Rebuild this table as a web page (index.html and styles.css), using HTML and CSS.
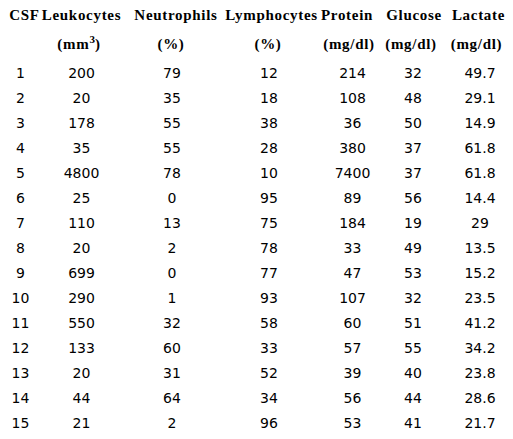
FILE: index.html
```html
<!DOCTYPE html>
<html>
<head>
<meta charset="utf-8">
<link rel="stylesheet" href="styles.css">
</head>
<body>
<div class="csf-table">
  <div class="head">
    <div class="row head-row">
      <div class="cell pl8"><span>CSF</span></div>
      <div class="cell"><span>Leukocytes</span></div>
      <div class="cell pl8"><span>Neutrophils</span></div>
      <div class="cell pl5"><span>Lymphocytes</span></div>
      <div class="cell pr11"><span>Protein</span></div>
      <div class="cell pl2"><span>Glucose</span></div>
      <div class="cell pl7"><span>Lactate</span></div>
    </div>
    <div class="row head-row">
      <div class="cell"></div>
      <div class="cell pr5"><span>(mm<sup>3</sup>)</span></div>
      <div class="cell pr2"><span>(%)</span></div>
      <div class="cell pr2"><span>(%)</span></div>
      <div class="cell pr7"><span>(mg/dl)</span></div>
      <div class="cell pr4"><span>(mg/dl)</span></div>
      <div class="cell pl3"><span>(mg/dl)</span></div>
    </div>
  </div>
  <div class="body">
    <div class="row data-row"><div class="cell">1</div><div class="cell">200</div><div class="cell">79</div><div class="cell">12</div><div class="cell">214</div><div class="cell">32</div><div class="cell pl10">49.7</div></div>
    <div class="row data-row"><div class="cell">2</div><div class="cell">20</div><div class="cell">35</div><div class="cell">18</div><div class="cell">108</div><div class="cell">48</div><div class="cell pl10">29.1</div></div>
    <div class="row data-row"><div class="cell">3</div><div class="cell">178</div><div class="cell">55</div><div class="cell">38</div><div class="cell">36</div><div class="cell">50</div><div class="cell pl10">14.9</div></div>
    <div class="row data-row"><div class="cell">4</div><div class="cell">35</div><div class="cell">55</div><div class="cell">28</div><div class="cell">380</div><div class="cell">37</div><div class="cell pl10">61.8</div></div>
    <div class="row data-row"><div class="cell">5</div><div class="cell">4800</div><div class="cell">78</div><div class="cell">10</div><div class="cell">7400</div><div class="cell">37</div><div class="cell pl10">61.8</div></div>
    <div class="row data-row"><div class="cell">6</div><div class="cell">25</div><div class="cell">0</div><div class="cell">95</div><div class="cell">89</div><div class="cell">56</div><div class="cell pl10">14.4</div></div>
    <div class="row data-row"><div class="cell">7</div><div class="cell">110</div><div class="cell">13</div><div class="cell">75</div><div class="cell">184</div><div class="cell">19</div><div class="cell pl10">29</div></div>
    <div class="row data-row"><div class="cell">8</div><div class="cell">20</div><div class="cell">2</div><div class="cell">78</div><div class="cell">33</div><div class="cell">49</div><div class="cell pl10">13.5</div></div>
    <div class="row data-row"><div class="cell">9</div><div class="cell">699</div><div class="cell">0</div><div class="cell">77</div><div class="cell">47</div><div class="cell">53</div><div class="cell pl10">15.2</div></div>
    <div class="row data-row"><div class="cell">10</div><div class="cell">290</div><div class="cell">1</div><div class="cell">93</div><div class="cell">107</div><div class="cell">32</div><div class="cell pl10">23.5</div></div>
    <div class="row data-row"><div class="cell">11</div><div class="cell">550</div><div class="cell">32</div><div class="cell">58</div><div class="cell">60</div><div class="cell">51</div><div class="cell pl10">41.2</div></div>
    <div class="row data-row"><div class="cell">12</div><div class="cell">133</div><div class="cell">60</div><div class="cell">33</div><div class="cell">57</div><div class="cell">55</div><div class="cell pl10">34.2</div></div>
    <div class="row data-row"><div class="cell">13</div><div class="cell">20</div><div class="cell">31</div><div class="cell">52</div><div class="cell">39</div><div class="cell">40</div><div class="cell pl10">23.8</div></div>
    <div class="row data-row"><div class="cell">14</div><div class="cell">44</div><div class="cell">64</div><div class="cell">34</div><div class="cell">56</div><div class="cell">44</div><div class="cell pl10">28.6</div></div>
    <div class="row data-row"><div class="cell">15</div><div class="cell">21</div><div class="cell">2</div><div class="cell">96</div><div class="cell">53</div><div class="cell">41</div><div class="cell pl10">21.7</div></div>
  </div>
</div>
</body>
</html>
```
FILE: styles.css
```css
html, body {
  margin: 0;
  padding: 0;
  background: #ffffff;
  color: #000000;
}

.csf-table {
  width: 513px;
}

.row {
  display: grid;
  grid-template-columns: 41px 81px 100px 94px 73px 48px 76px;
}

.cell {
  display: flex;
  justify-content: center;
  white-space: nowrap;
}

.head {
  padding-top: 1px;
  padding-bottom: 2px;
}

.head-row {
  font-family: "Liberation Serif", "Times New Roman", serif;
  font-weight: bold;
  font-size: 15px;
  letter-spacing: 0.7px;
  line-height: 29px;
}

.head-row sup {
  font-size: 11px;
  line-height: 0;
  vertical-align: 6px;
  letter-spacing: 0;
}

.data-row {
  font-family: "DejaVu Sans", sans-serif;
  font-size: 14px;
  line-height: 25px;
}

.pl2 { padding-left: 2px; }
.pl3 { padding-left: 3px; }
.pl5 { padding-left: 5px; }
.pl7 { padding-left: 7px; }
.pl8 { padding-left: 8px; }
.pl10 { padding-left: 10px; }
.pr2 { padding-right: 2px; }
.pr4 { padding-right: 4px; }
.pr5 { padding-right: 5px; }
.pr7 { padding-right: 7px; }
.pr11 { padding-right: 11px; }
```
